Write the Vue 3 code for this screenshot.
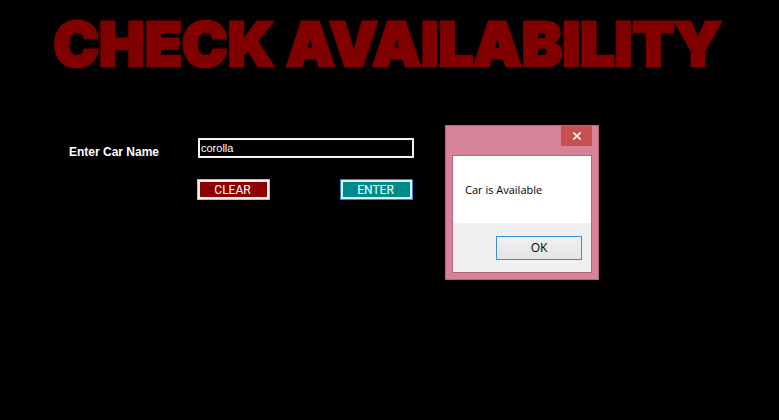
<script setup>
import { ref } from 'vue'

const carName = ref('corolla')
const message = ref('Car is Available')

function clear() {
  carName.value = ''
}

function check() {
  message.value = 'Car is Available'
}

function dismiss() {
  message.value = ''
}
</script>

<template>
  <main class="screen">
    <h1 class="title">CHECK AVAILABILITY</h1>

    <form class="form" @submit.prevent="check">
      <label class="label" for="car-name">Enter Car Name</label>
      <div class="fields">
        <input id="car-name" v-model="carName" class="input" type="text" autocomplete="off" spellcheck="false" />
        <div class="actions">
          <button class="btn clear" type="button" @click="clear">CLEAR</button>
          <button class="btn enter" type="submit">ENTER</button>
        </div>
      </div>
    </form>

    <section v-if="message" class="dialog" role="dialog" aria-labelledby="dialog-message">
      <header class="bar">
        <button class="close" type="button" aria-label="Close" @click="dismiss">
          <svg width="10" height="8" viewBox="0 0 10 8" aria-hidden="true">
            <path d="M1.3 0.5 L8.7 7.5 M8.7 0.5 L1.3 7.5" stroke="#fff" stroke-width="1.6" fill="none" />
          </svg>
        </button>
      </header>
      <div class="body">
        <p id="dialog-message" class="message">{{ message }}</p>
        <footer class="footer">
          <button class="ok" type="button" @click="dismiss">OK</button>
        </footer>
      </div>
    </section>
  </main>
</template>

<style>
body {
  background: #000;
}
</style>

<style scoped>
.screen {
  position: relative;
  box-sizing: border-box;
  min-height: 100vh;
  padding: 4px 0 0;
  background: #000;
  color: #fff;
  font-family: Roboto, "Liberation Sans", sans-serif;
  font-size: 12px;
  overflow: hidden;
}

.title {
  margin: 0;
  padding-right: 4px;
  text-align: center;
  white-space: nowrap;
  color: #800000;
  font-family: Inter, "Open Sans", sans-serif;
  font-size: 61px;
  font-weight: 900;
  line-height: 80px;
  -webkit-text-stroke: 3px #800000;
}

.form {
  display: grid;
  grid-template-columns: 128px 216px;
  align-items: start;
  padding: 54px 0 0 69px;
}

.label {
  padding-top: 6px;
  font-family: "Liberation Sans", sans-serif;
  font-weight: 700;
  line-height: 16px;
}

.fields {
  display: flex;
  flex-direction: column;
  gap: 21px;
}

.input {
  box-sizing: border-box;
  width: 100%;
  height: 20px;
  margin-left: 1px;
  padding: 0 1px;
  border: 2px solid #f4f4f4;
  border-radius: 0;
  outline: 0;
  background: #000;
  color: #fff;
  font-family: "Liberation Sans", sans-serif;
  font-size: 11px;
}

.actions {
  display: flex;
  justify-content: space-between;
}

.btn {
  box-sizing: border-box;
  width: 73px;
  height: 21px;
  padding: 0 2px 0 0;
  border: 1px solid;
  color: #fff;
  font: inherit;
}

.clear {
  border-color: #c8b8b8;
  background: #8b0000;
  box-shadow: inset 0 0 0 2px #fbeeee;
}

.enter {
  border-color: #3c78d8;
  background: #008b8b;
  box-shadow: inset 0 0 0 2px #d8f4ff;
}

.dialog {
  position: absolute;
  top: 125px;
  left: 445px;
  box-sizing: border-box;
  width: 154px;
  padding: 0 6px 6px;
  border: 1px solid #b5667d;
  background: #d68299;
  color: #000;
  font-family: "Open Sans", "Noto Sans", sans-serif;
}

.bar {
  display: flex;
  justify-content: flex-end;
  height: 29px;
}

.close {
  display: flex;
  align-items: center;
  justify-content: center;
  width: 31px;
  height: 20px;
  padding: 0;
  border: 0;
  background: #c75050;
}

.body {
  border: 1px solid #b5667d;
  background: #fff;
}

.message {
  margin: 0;
  padding: 26px 12px 25px;
  font-size: 11px;
  line-height: 16px;
  white-space: nowrap;
}

.footer {
  display: flex;
  justify-content: flex-end;
  padding: 13px 9px 12px;
  background: #f0f0f0;
}

.ok {
  box-sizing: border-box;
  width: 86px;
  height: 24px;
  padding: 0 0 2px;
  border: 1px solid #3c8fdc;
  background: linear-gradient(#f0f0f0, #e4e4e4);
  color: #000;
  font: inherit;
}
</style>
